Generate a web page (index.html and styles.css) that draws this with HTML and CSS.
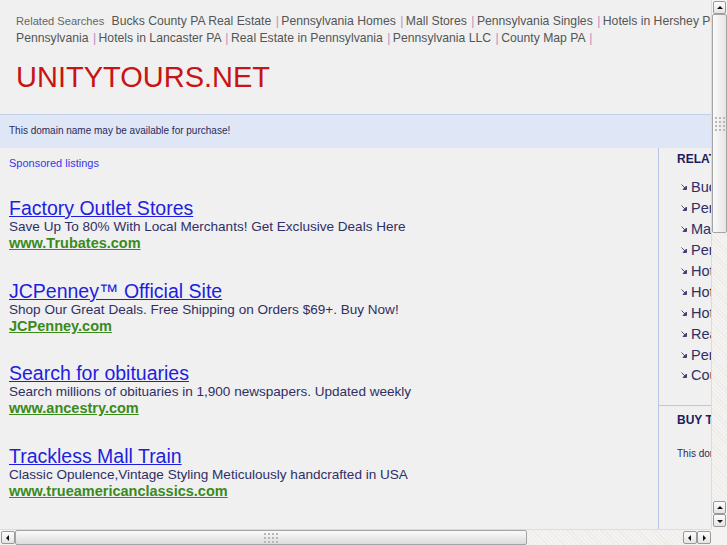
FILE: index.html
```html
<!DOCTYPE html>
<html lang="en">
<head>
  <meta charset="UTF-8" />
  <title>unitytours.net</title>
  <link rel="stylesheet" href="styles.css">
</head>
<body>
  <div class="screen">
    <div class="viewport">
      <div class="page">
        <div class="header">
          <div class="related-top">
            <span class="rel-label">Related Searches</span>
            <a href="#">Bucks County PA Real Estate</a> <span class="sep">|</span><a href="#">Pennsylvania Homes</a> <span class="sep">|</span><a href="#">Mall Stores</a> <span class="sep">|</span><a href="#">Pennsylvania Singles</a> <span class="sep">|</span><a href="#">Hotels in Hershey Pennsylvania</a> <span class="sep">|</span><a href="#">Hotels in Pennsylvania</a> <span class="sep">|</span><a href="#">Hotels in Lancaster PA</a> <span class="sep">|</span><a href="#">Real Estate in Pennsylvania</a> <span class="sep">|</span><a href="#">Pennsylvania LLC</a> <span class="sep">|</span><a href="#">County Map PA</a> <span class="sep">|</span>
          </div>
          <h1 class="domain">UNITYTOURS.NET</h1>
        </div>
        <div class="band">This domain name may be available for purchase!</div>
        <div class="main">
          <div class="left">
            <div class="sponsored">Sponsored listings</div>
            <div class="ad">
              <a class="ad-title" href="#">Factory Outlet Stores</a>
              <div class="ad-desc">Save Up To 80% With Local Merchants! Get Exclusive Deals Here</div>
              <a class="ad-url" href="#">www.Trubates.com</a>
            </div>
            <div class="ad">
              <a class="ad-title" href="#">JCPenney™ Official Site</a>
              <div class="ad-desc">Shop Our Great Deals. Free Shipping on Orders $69+. Buy Now!</div>
              <a class="ad-url" href="#">JCPenney.com</a>
            </div>
            <div class="ad">
              <a class="ad-title" href="#">Search for obituaries</a>
              <div class="ad-desc">Search millions of obituaries in 1,900 newspapers. Updated weekly</div>
              <a class="ad-url" href="#">www.ancestry.com</a>
            </div>
            <div class="ad">
              <a class="ad-title" href="#">Trackless Mall Train</a>
              <div class="ad-desc">Classic Opulence,Vintage Styling Meticulously handcrafted in USA</div>
              <a class="ad-url" href="#">www.trueamericanclassics.com</a>
            </div>
          </div>
          <div class="right">
            <div class="side-block">
              <h3 class="side-title">RELATED SEARCHES</h3>
              <ul class="side-list">
                <li><svg class="arr" width="6" height="6" viewBox="0 0 6 6"><path d="M0.5 0.5L4 4M5.5 2V5.5H2Z" stroke="#3a3a70" fill="#3a3a70" stroke-width="0.9"/></svg><a href="#">Bucks County PA Real Estate</a></li>
                <li><svg class="arr" width="6" height="6" viewBox="0 0 6 6"><path d="M0.5 0.5L4 4M5.5 2V5.5H2Z" stroke="#3a3a70" fill="#3a3a70" stroke-width="0.9"/></svg><a href="#">Pennsylvania Homes</a></li>
                <li><svg class="arr" width="6" height="6" viewBox="0 0 6 6"><path d="M0.5 0.5L4 4M5.5 2V5.5H2Z" stroke="#3a3a70" fill="#3a3a70" stroke-width="0.9"/></svg><a href="#">Mall Stores</a></li>
                <li><svg class="arr" width="6" height="6" viewBox="0 0 6 6"><path d="M0.5 0.5L4 4M5.5 2V5.5H2Z" stroke="#3a3a70" fill="#3a3a70" stroke-width="0.9"/></svg><a href="#">Pennsylvania Singles</a></li>
                <li><svg class="arr" width="6" height="6" viewBox="0 0 6 6"><path d="M0.5 0.5L4 4M5.5 2V5.5H2Z" stroke="#3a3a70" fill="#3a3a70" stroke-width="0.9"/></svg><a href="#">Hotels in Hershey Pennsylvania</a></li>
                <li><svg class="arr" width="6" height="6" viewBox="0 0 6 6"><path d="M0.5 0.5L4 4M5.5 2V5.5H2Z" stroke="#3a3a70" fill="#3a3a70" stroke-width="0.9"/></svg><a href="#">Hotels in Pennsylvania</a></li>
                <li><svg class="arr" width="6" height="6" viewBox="0 0 6 6"><path d="M0.5 0.5L4 4M5.5 2V5.5H2Z" stroke="#3a3a70" fill="#3a3a70" stroke-width="0.9"/></svg><a href="#">Hotels in Lancaster PA</a></li>
                <li><svg class="arr" width="6" height="6" viewBox="0 0 6 6"><path d="M0.5 0.5L4 4M5.5 2V5.5H2Z" stroke="#3a3a70" fill="#3a3a70" stroke-width="0.9"/></svg><a href="#">Real Estate in Pennsylvania</a></li>
                <li><svg class="arr" width="6" height="6" viewBox="0 0 6 6"><path d="M0.5 0.5L4 4M5.5 2V5.5H2Z" stroke="#3a3a70" fill="#3a3a70" stroke-width="0.9"/></svg><a href="#">Pennsylvania LLC</a></li>
                <li><svg class="arr" width="6" height="6" viewBox="0 0 6 6"><path d="M0.5 0.5L4 4M5.5 2V5.5H2Z" stroke="#3a3a70" fill="#3a3a70" stroke-width="0.9"/></svg><a href="#">County Map PA</a></li>
              </ul>
            </div>
            <div class="side-block buy">
              <h3 class="side-title">BUY THIS DOMAIN</h3>
              <p class="buy-text">This domain name may be available for purchase!</p>
            </div>
          </div>
        </div>
      </div>
    </div>
    <div class="vbar">
      <div class="btn up"></div>
      <div class="thumb-v"><span class="grip grip-v"></span></div>
      <div class="trough"></div>
      <div class="btn up"></div>
      <div class="btn down"></div>
    </div>
    <div class="hbar">
      <div class="btn left"></div>
      <div class="thumb-h"><span class="grip grip-h"></span></div>
      <div class="trough"></div>
      <div class="btn left"></div>
      <div class="btn right-arrow"></div>
    </div>
    <div class="corner"></div>
  </div>
</body>
</html>
```

FILE: styles.css
```css
body { margin: 0; font-family: "Liberation Sans", Arial, sans-serif; background: #f0f0f0; }
a { text-decoration: none; }
.screen { display: grid; grid-template-columns: 711px 16px; grid-template-rows: 529px 16px; width: 727px; height: 545px; overflow: hidden; }
.viewport { overflow: hidden; background: #f0f0f0; }
.page { width: 900px; }

/* header */
.header { padding: 13px 16px 19px; border-bottom: 1px solid #c3d0ea; }
.related-top { font-size: 12.2px; line-height: 17px; color: #555; }
.related-top a { color: #555; }
.rel-label { font-size: 11.1px; color: #666; margin-right: 4px; }
.sep { color: #c48bbd; margin: 0 2.5px 0 1px; }
.domain { margin: 12px 0 0; font-size: 29px; line-height: 36px; font-weight: normal; color: #c81414; }

.band { background: #dfe6f5; height: 33px; line-height: 31px; padding-left: 9px; font-size: 10px; color: #2a2a5a; }

/* columns */
.main { display: flex; min-height: 390px; }
.left { width: 649px; padding-left: 9px; }
.right { flex: 1; border-left: 1px solid #b6c7e8; }

.sponsored { margin-top: 8px; font-size: 11px; line-height: 14px; color: #3535ee; }
.ad { margin-top: 28px; }
.ad + .ad { margin-top: 28.7px; }
.ad-title { display: block; width: max-content; font-size: 19.5px; line-height: 20px; color: #1e1ee0; text-decoration: underline; }
.ad-desc { font-size: 13.55px; line-height: 17px; color: #2f2f66; }
.ad-url { display: block; width: max-content; font-size: 14.5px; line-height: 17px; font-weight: bold; color: #3a8a1c; text-decoration: underline; }

.side-block { padding: 4px 0 19px 18px; }
.side-title { margin: 0; font-size: 12px; line-height: 14px; font-weight: bold; color: #1d1d5e; }
.side-list { list-style: none; margin: 11px 0 0; padding: 0 0 0 4px; }
.side-list li { display: flex; align-items: center; height: 20.9px; white-space: nowrap; }
.side-list a { font-size: 14.5px; color: #2f2f66; }
.arr { margin-right: 4px; flex: none; }
.buy { border-top: 1px solid #b6c7e8; padding-top: 7px; }
.buy-text { margin: 21px 0 0; font-size: 10px; line-height: 12px; color: #2a2a5a; white-space: nowrap; }

/* scrollbars */
.vbar { display: flex; flex-direction: column; background: #f4f3f1; border-left: 1px solid #dcdcdc; }
.hbar { display: flex; background: #f4f3f1; border-top: 1px solid #dcdcdc; }
.corner { background: #f4f3f1; }
.trough { flex: 1; background: repeating-linear-gradient(45deg, #f4f3f1 0 2px, #ecebe8 2px 3px); }
.btn { position: relative; flex: none; box-sizing: border-box; border: 1px solid #9a9a9a; border-radius: 2px; background: linear-gradient(#fdfdfd, #e4e4e4); }
.vbar .btn { height: 13px; margin: 0 1px; }
.vbar .btn:first-child { margin-top: 1px; }
.vbar .btn.down { margin-bottom: 2px; }
.hbar .btn { width: 14px; margin: 1px 0; }
.hbar .btn:first-child { margin-left: 1px; }
.btn::after { content: ""; position: absolute; left: 50%; top: 50%; width: 0; height: 0; border: 3px solid transparent; }
.up::after { border-bottom-color: #111; margin: -5px 0 0 -3px; }
.down::after { border-top-color: #111; margin: -1px 0 0 -3px; }
.left::after { border-right-color: #111; margin: -3px 0 0 -5px; }
.right-arrow::after { border-left-color: #111; margin: -3px 0 0 -1px; }
.thumb-v { height: 219px; flex: none; box-sizing: border-box; border: 1px solid #a4a4a4; border-radius: 2px; background: linear-gradient(90deg, #fafafa, #e6e6e6); display: flex; align-items: center; justify-content: center; }
.thumb-h { width: 512px; flex: none; box-sizing: border-box; border: 1px solid #a4a4a4; border-radius: 2px; background: linear-gradient(#fafafa, #dcdcdc); display: flex; align-items: center; justify-content: center; }
.grip { display: block; background: radial-gradient(circle, #b8b8b8 0.9px, transparent 1.3px) 0 0 / 4px 4px; }
.grip-v { width: 12px; height: 16px; }
.grip-h { width: 16px; height: 12px; }
```
